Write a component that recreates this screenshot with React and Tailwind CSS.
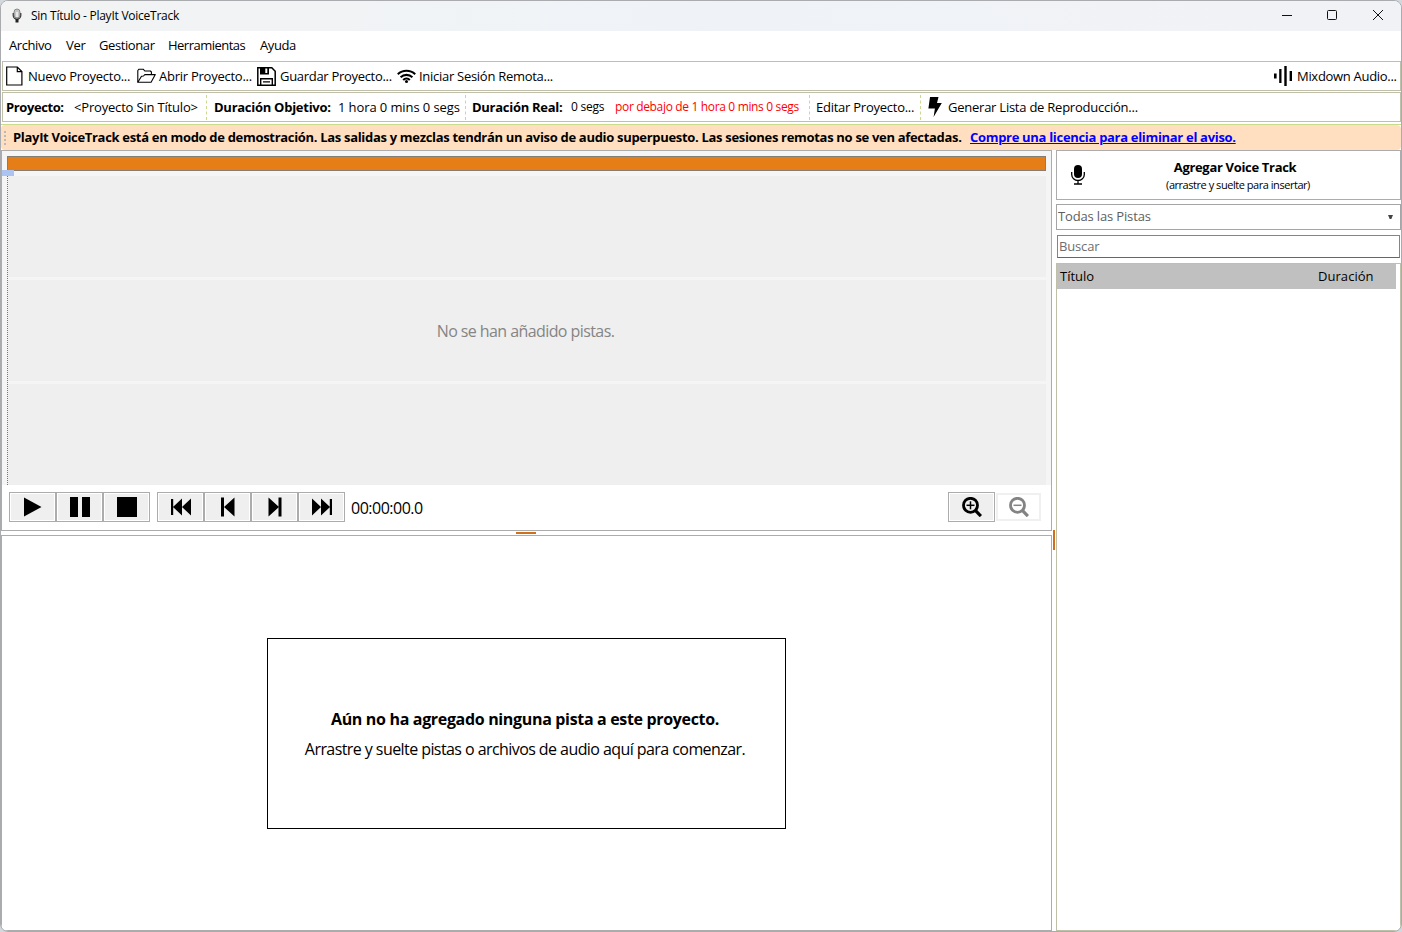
import clsx from 'clsx';

const MENU = [
  { label: 'Archivo', className: 'w-[57px] tracking-[-0.42px]' },
  { label: 'Ver', className: 'w-[33px] tracking-[-0.3px]' },
  { label: 'Gestionar', className: 'w-[69px] tracking-[-0.4px]' },
  { label: 'Herramientas', className: 'w-[92px] tracking-[-0.52px]' },
  { label: 'Ayuda', className: 'w-[60px] tracking-[-0.4px]' },
];

export default function App() {
  return (
    <div className="h-[932px] w-[1402px] overflow-hidden bg-[#d3d8de] font-['Open_Sans',sans-serif] text-[13px] text-black">
      <div className="flex h-full w-full flex-col overflow-hidden rounded-lg border border-[#a9abae] bg-white">
        <TitleBar />
        <MenuBar />
        <MainToolbar />
        <ProjectToolbar />
        <DemoBanner />
        <div className="flex min-h-0 flex-1">
          <div className="flex w-[1051px] flex-col">
            <Timeline />
            {/* Horizontal splitter */}
            <div className="flex h-1 shrink-0 justify-center pt-px pr-0.5">
              <div className="h-0.5 w-5 bg-[#cf711a]" />
            </div>
            <TrackPanel />
          </div>
          {/* Vertical splitter */}
          <div className="flex w-1 flex-col items-center pt-[380px]">
            <div className="h-5 w-0.5 bg-[#cf711a]" />
          </div>
          <Library />
        </div>
      </div>
    </div>
  );
}

function TitleBar() {
  return (
    <div className="flex h-[30px] shrink-0 items-center bg-linear-to-r from-[#f3f3f3] via-[#eff3f8] to-[#f1f2f5]">
      <svg className="ml-2.5 shrink-0" width="12" height="16" viewBox="0 0 12 16">
        <rect x="3" y="1" width="6" height="9" rx="3" fill="#c4c4c4" stroke="#777" strokeWidth="0.8" />
        <path d="M2.2 5v2.5a3.8 3.6 0 0 0 7.6 0V5" fill="none" stroke="#333" strokeWidth="1.2" />
        <path d="M6 4v5" stroke="#f4f4f4" strokeWidth="1.5" />
        <path d="M4.5 11h3v3.5h-3z" fill="#222" />
      </svg>
      <span className="ml-2 flex-1 text-[12px] tracking-[-0.25px]">Sin Título - PlayIt VoiceTrack</span>
      <svg className="shrink-0" width="120" height="30" viewBox="0 0 120 30" fill="none" stroke="#111" strokeWidth="1">
        <path d="M1 14.5h10" />
        <rect x="46.5" y="9.5" width="9" height="9" rx="1" />
        <path d="M92 9l10 10M102 9L92 19" />
      </svg>
    </div>
  );
}

function MenuBar() {
  return (
    <div className="flex h-[30px] shrink-0 items-center pl-2">
      {MENU.map((item) => (
        <span key={item.label} className={clsx('shrink-0 whitespace-nowrap', item.className)}>
          {item.label}
        </span>
      ))}
    </div>
  );
}

function Cell({ className, children }) {
  return <span className={clsx('shrink-0 whitespace-nowrap', className)}>{children}</span>;
}

function MainToolbar() {
  return (
    <div className="ml-px flex h-[30px] shrink-0 items-center border border-[#bfbfaa]">
      <svg className="mr-[5px] ml-[3px] shrink-0" width="17" height="20" viewBox="0 0 17 20" fill="none" stroke="#000" strokeWidth="1.2">
        <path d="M.7 1h10.6l4.6 4.6V19H.7z" />
        <path d="M11.3 1v4.6h4.6" />
      </svg>
      <Cell className="w-[109px] pt-0.5 tracking-[-0.25px]">Nuevo Proyecto...</Cell>
      <svg className="mr-[3px] shrink-0" width="19" height="16" viewBox="0 0 19 16" fill="none" stroke="#000" strokeWidth="1.1" strokeLinejoin="round">
        <path d="M.8 14.3V2.5L2 1.2h4.2L7.8 3h5.6l1 1v2.6" />
        <path d="M.8 14.3L4.5 8.2l2-.2 1.3-1.4h10.5l-4.2 7.7z" />
      </svg>
      <Cell className="w-[98px] pt-0.5 tracking-[-0.25px]">Abrir Proyecto...</Cell>
      <svg className="mr-[4px] shrink-0" width="19" height="19" viewBox="0 0 19 19">
        <path d="M.8.8h14l3.4 3.4v14H.8z" fill="none" stroke="#000" strokeWidth="1.5" />
        <path d="M3 1h9v6.5H3z" fill="#000" />
        <path d="M8.3 1.6h2v4.4h-2z" fill="#fff" />
        <path d="M3.7 18v-6.3h11.6V18" fill="none" stroke="#000" strokeWidth="1.4" />
        <path d="M6 14.8h7" stroke="#000" strokeWidth="1.2" />
      </svg>
      <Cell className="w-[117px] pt-0.5 tracking-[-0.3px]">Guardar Proyecto...</Cell>
      <svg className="mr-[3px] shrink-0" width="19" height="15" viewBox="0 0 19 15" fill="none" stroke="#000" strokeWidth="2.1">
        <path d="M.8 5.2a12.6 12.6 0 0 1 17.4 0" />
        <path d="M3.6 8.2a8.6 8.6 0 0 1 11.8 0" />
        <path d="M6.2 10.9a4.8 4.8 0 0 1 6.6 0" />
        <circle cx="9.5" cy="12.6" r="1.5" fill="#000" stroke="none" />
      </svg>
      <Cell className="pt-0.5 tracking-[-0.28px]">Iniciar Sesión Remota...</Cell>
      <span className="flex-1" />
      <svg className="mr-[4px] shrink-0" width="19" height="20" viewBox="0 0 19 20" fill="#000">
        <rect x="0" y="7.5" width="2.6" height="5" />
        <rect x="5.2" y="3" width="2.3" height="14" />
        <rect x="10.3" y="0" width="2.4" height="20" />
        <rect x="15.6" y="5" width="2.4" height="10" />
      </svg>
      <Cell className="w-[103px] pt-0.5 tracking-[-0.3px]">Mixdown Audio...</Cell>
    </div>
  );
}

function Separator({ className }) {
  return <span className={clsx('h-[25px] w-0 shrink-0 border-l border-dashed border-[#cbd98e]', className)} />;
}

function ProjectToolbar() {
  return (
    <div className="mt-px ml-px flex h-[30px] shrink-0 items-center border border-[#bfbfaa]">
      <Cell className="ml-[3px] w-[68px] pt-0.5 font-bold tracking-[-0.4px]">Proyecto:</Cell>
      <Cell className="w-[132px] pt-0.5 tracking-[-0.18px]">&lt;Proyecto Sin Título&gt;</Cell>
      <Separator className="mr-[7px]" />
      <Cell className="w-[124px] pt-0.5 font-bold tracking-[-0.27px]">Duración Objetivo:</Cell>
      <Cell className="w-[127px] pt-0.5 tracking-[-0.1px]">1 hora 0 mins 0 segs</Cell>
      <Separator className="mr-[6px]" />
      <Cell className="w-[99px] pt-0.5 font-bold tracking-[-0.28px]">Duración Real:</Cell>
      <Cell className="w-[44px] text-[12px] tracking-[-0.25px]">0 segs</Cell>
      <Cell className="w-[194px] text-[12px] tracking-[-0.34px] text-[#ff0000]">por debajo de 1 hora 0 mins 0 segs</Cell>
      <Separator className="mr-[6px]" />
      <Cell className="w-[104px] pt-0.5 tracking-[-0.25px]">Editar Proyecto...</Cell>
      <Separator className="mr-[7px]" />
      <svg className="mr-[6px] shrink-0" width="14" height="20" viewBox="0 0 14 20">
        <path d="M2 0h8.5L9 6h4.8L5.6 20l1.3-8.5H.4z" fill="#000" />
      </svg>
      <Cell className="pt-0.5 tracking-[-0.24px]">Generar Lista de Reproducción...</Cell>
    </div>
  );
}

function DemoBanner() {
  return (
    <div className="mt-0.5 h-[26px] shrink-0 border-t border-[#c9dc8c]">
      <div className="flex h-[25px] items-center rounded-sm bg-[#ffdfbf] font-bold">
        <span className="mr-[6px] ml-[3px] flex w-0.5 flex-col gap-0.5">
          <span className="h-0.5 w-0.5 bg-[#b9b9b9]" />
          <span className="h-0.5 w-0.5 bg-[#b9b9b9]" />
          <span className="h-0.5 w-0.5 bg-[#b9b9b9]" />
          <span className="h-0.5 w-0.5 bg-[#b9b9b9]" />
        </span>
        <Cell className="ml-px w-[957px] tracking-[-0.312px]">
          PlayIt VoiceTrack está en modo de demostración. Las salidas y mezclas tendrán un aviso de audio superpuesto. Las
          sesiones remotas no se ven afectadas.
        </Cell>
        <a className="shrink-0 whitespace-nowrap tracking-[-0.31px] text-[#0000ff] underline" href="#">
          Compre una licencia para eliminar el aviso.
        </a>
      </div>
    </div>
  );
}

function Timeline() {
  return (
    <div className="flex h-[381px] shrink-0 flex-col border border-[#acacac]">
      <div className="relative flex h-[334px] flex-col bg-[#f5f5f5] pt-[5px] pr-[5px] pl-[5px]">
        <div className="h-[15px] shrink-0 border border-[#857d74] bg-[#e67e17]" />
        <div className="mt-[5px] grid flex-1 grid-rows-3 gap-[3px] border-l border-dotted border-[#777]">
          <div className="bg-[#efefef]" />
          <div className="flex items-center justify-center bg-[#efefef] pt-px pr-[3px] text-[16px] tracking-[-0.58px] text-[#858585]">
            No se han añadido pistas.
          </div>
          <div className="bg-[#efefef]" />
        </div>
        {/* Playhead marker */}
        <div className="absolute top-[19px] left-0 h-1.5 w-3 bg-[#abc4f2]" />
      </div>
      <Transport />
    </div>
  );
}

function TransportButton({ className, disabled, children }) {
  return (
    <button
      className={clsx(
        'flex shrink-0 items-center justify-center',
        disabled
          ? 'mt-px h-7 w-[45px] border-2 border-[#f0f0f0] bg-white'
          : 'h-[30px] w-[47px] border border-[#acacac] bg-[#efefef] shadow-[inset_0_0_0_1px_#fff]',
        className
      )}
    >
      {children}
    </button>
  );
}

function Transport() {
  return (
    <div className="flex flex-1 items-start pt-[7px] pl-[7px]">
      <TransportButton>
        <svg width="20" height="20" viewBox="0 0 20 20">
          <path d="M1 .5L18.5 10 1 19.5z" />
        </svg>
      </TransportButton>
      <TransportButton>
        <svg width="20" height="20" viewBox="0 0 20 20">
          <path d="M0 0h8v20H0zM12 0h8v20h-8z" />
        </svg>
      </TransportButton>
      <TransportButton>
        <svg width="20" height="20" viewBox="0 0 20 20">
          <path d="M0 0h20v20H0z" />
        </svg>
      </TransportButton>
      <TransportButton className="ml-[7px]">
        <svg width="20" height="18" viewBox="0 0 20 18">
          <path d="M0 1h2.2v16H0zM11 .5v17L2 9zM20 .5v17L11 9z" />
        </svg>
      </TransportButton>
      <TransportButton>
        <svg width="14" height="20" viewBox="0 0 14 20">
          <path d="M0 .5h3v19H0zM13.5 .5v19L3 10z" />
        </svg>
      </TransportButton>
      <TransportButton>
        <svg width="14" height="20" viewBox="0 0 14 20">
          <path d="M10.5 .5h3v19h-3zM.5 .5v19L11 10z" />
        </svg>
      </TransportButton>
      <TransportButton>
        <svg width="20" height="18" viewBox="0 0 20 18">
          <path d="M17.8 1H20v16h-2.2zM9 .5v17L18 9zM0 .5v17L9 9z" />
        </svg>
      </TransportButton>
      <span className="mt-[5px] ml-[6px] flex-1 text-[16px] leading-[22px] tracking-[-0.5px]">00:00:00.0</span>
      <TransportButton>
        <ZoomIcon plus />
      </TransportButton>
      <TransportButton className="mr-[10px] ml-px" disabled>
        <ZoomIcon />
      </TransportButton>
    </div>
  );
}

function ZoomIcon({ plus }) {
  return (
    <svg width="20" height="20" viewBox="0 0 20 20" fill="none" stroke={plus ? '#000' : '#838383'}>
      <circle cx="8.5" cy="8.3" r="7" strokeWidth="2.8" />
      <path d="M13.3 13.3l5.6 5.8" strokeWidth="3.2" />
      <path d="M4.5 8.3h8" strokeWidth="1.5" />
      {plus && <path d="M8.5 4.3v8" strokeWidth="1.5" />}
    </svg>
  );
}

function TrackPanel() {
  return (
    <div className="flex flex-1 flex-col items-center border border-[#acacac] pt-[102px]">
      <div className="flex h-[191px] w-[519px] flex-col items-center border border-black pt-[68px] pr-[3px] text-[16px] leading-[24px]">
        <div className="font-bold tracking-[-0.33px] whitespace-nowrap">Aún no ha agregado ninguna pista a este proyecto.</div>
        <div className="mt-1.5 tracking-[-0.57px] whitespace-nowrap">Arrastre y suelte pistas o archivos de audio aquí para comenzar.</div>
      </div>
    </div>
  );
}

function Library() {
  return (
    <div className="flex min-w-0 flex-1 flex-col">
      <div className="flex h-[50px] shrink-0 items-center border border-[#acacac]">
        <svg className="ml-[14px] shrink-0" width="14" height="20" viewBox="0 0 14 20">
          <rect x="3" y="0" width="8" height="13" rx="4" />
          <path d="M.7 7v2.5a6.3 6 0 0 0 12.6 0V7M7 15.5V19M3 19h8" fill="none" stroke="#000" strokeWidth="1.3" />
        </svg>
        <div className="flex flex-1 flex-col items-center pr-[15px]">
          <span className="font-bold leading-[18px] tracking-[-0.32px]">Agregar Voice Track</span>
          <span className="mr-[-6px] text-[11px] leading-[17px] tracking-[-0.46px]">(arrastre y suelte para insertar)</span>
        </div>
      </div>
      <div className="mt-1 flex h-[26px] shrink-0 items-center border border-[#a5a5a5] pl-px text-[#5e5e5e]">
        <span className="flex-1 tracking-[-0.15px]">Todas las Pistas</span>
        <svg className="mr-[7px]" width="5" height="4" viewBox="0 0 5 4">
          <path d="M0 0h5L3.3 4H1.7z" fill="#444" />
        </svg>
      </div>
      <div className="mx-px mt-[5px] flex h-[23px] shrink-0 items-center border border-[#858585] border-b-[#666] pl-px tracking-[-0.15px] text-[#6e6e6e]">
        Buscar
      </div>
      <div className="mt-[5px] flex flex-1 flex-col border border-[#bfbfaa]">
        <div className="mr-1 flex h-[25px] shrink-0 items-center bg-[#c0c0c0] pl-[3px]">
          <span className="w-[258px]">Título</span>
          <span className="tracking-[0.05px]">Duración</span>
        </div>
      </div>
    </div>
  );
}
